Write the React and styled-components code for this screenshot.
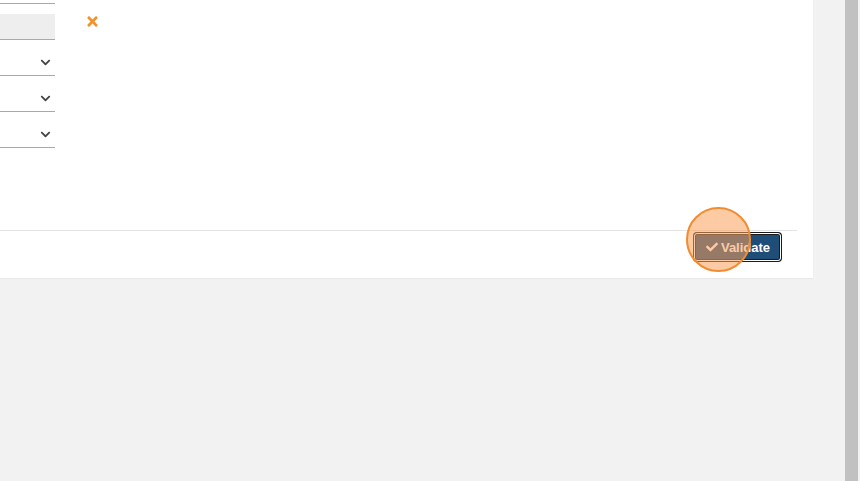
import React from 'react';
import styled, { createGlobalStyle } from 'styled-components';
import { FaCheck, FaTimes, FaChevronDown } from 'react-icons/fa';

const GlobalStyle = createGlobalStyle`
  html, body { margin: 0; padding: 0; }
  body {
    background: #f2f2f2;
    font-family: 'Liberation Sans', Arial, sans-serif;
    overflow: hidden;
  }
`;

const Screen = styled.div`
  display: flex;
  width: 860px;
  height: 481px;
`;

const Main = styled.div`
  flex: 1;
  display: flex;
  align-items: flex-start;
`;

const Panel = styled.div`
  width: 813px;
  height: 278px;
  background: #ffffff;
  display: flex;
  flex-direction: column;
  box-shadow: 0 1px 1px rgba(0,0,0,0.04);
  overflow: hidden;
`;

const Body = styled.div`
  height: 230px;
  display: flex;
  gap: 30px;
`;

const FormColumn = styled.div`
  width: 55px;
  margin-top: -22px;
  display: flex;
  flex-direction: column;
  gap: 10px;
`;

const Field = styled.div`
  height: 25px;
  border-bottom: 1px solid #a9a9a9;
  background: ${p => (p.$filled ? '#eeeeee' : 'transparent')};
  display: flex;
  align-items: center;
  justify-content: flex-end;
  padding-right: 4px;
  color: #444;
  font-size: 11px;
`;

const Remove = styled.div`
  padding-top: 14px;
  color: #f0922e;
  font-size: 15px;
  line-height: 1;
`;

const Footer = styled.div`
  margin-right: 16px;
  border-top: 1px solid #e4e4e4;
  display: flex;
  justify-content: flex-end;
  padding: 2px 16px 0 0;
`;

const ButtonWrap = styled.div`
  position: relative;
`;

const ValidateButton = styled.button`
  height: 28px;
  width: 87px;
  box-sizing: border-box;
  background: #1e4d78;
  color: #ffffff;
  border: 1px solid #ffffff;
  border-radius: 3px;
  box-shadow: 0 0 0 1px #1b1b1b, inset 0 0 0 1px #1b1b1b;
  font-family: 'Liberation Sans', Arial, sans-serif;
  font-weight: bold;
  font-size: 13px;
  display: flex;
  align-items: center;
  justify-content: center;
  gap: 3px;
  padding: 0 0 0 1px;
`;

const Spot = styled.div`
  position: absolute;
  left: -8px;
  top: -26px;
  width: 61px;
  height: 61px;
  border-radius: 50%;
  border: 2px solid #f08c32;
  background: rgba(250, 160, 90, 0.55);
  pointer-events: none;
`;

const Scrollbar = styled.div`
  width: 15px;
  display: flex;
`;

const Thumb = styled.div`
  width: 13px;
  background: #c1c1c1;
`;

export default function App() {
  return (
    <Screen>
      <GlobalStyle />
      <Main>
        <Panel>
          <Body>
            <FormColumn>
              <Field />
              <Field $filled />
              <Field><FaChevronDown /></Field>
              <Field><FaChevronDown /></Field>
              <Field><FaChevronDown /></Field>
            </FormColumn>
            <Remove><FaTimes /></Remove>
          </Body>
          <Footer>
            <ButtonWrap>
              <ValidateButton>
                <FaCheck size={12} />
                Validate
              </ValidateButton>
              <Spot />
            </ButtonWrap>
          </Footer>
        </Panel>
      </Main>
      <Scrollbar>
        <Thumb />
      </Scrollbar>
    </Screen>
  );
}
